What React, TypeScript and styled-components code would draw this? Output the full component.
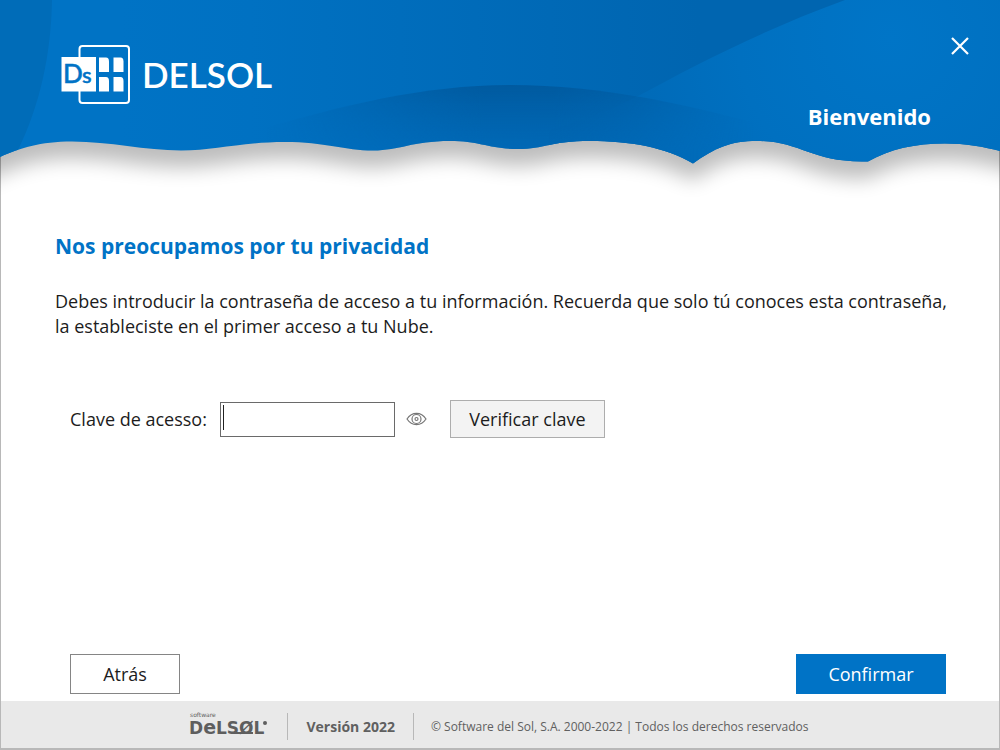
import React from "react";
import styled, { createGlobalStyle } from "styled-components";

const GlobalStyle = createGlobalStyle`
  * { box-sizing: border-box; }
  body { margin: 0; background: #fff; }
  body, button, input { font-family: "Open Sans", "Noto Sans", sans-serif; }
  h1, h2, p { margin: 0; }
`;

const Window = styled.div`
  min-height: 100vh;
  display: flex;
  flex-direction: column;
  border: solid #b8b8b8;
  border-width: 0 1px 2px;
  background: #fff;
  color: #1c1c1c;
`;

const Header = styled.header`
  position: relative;
  height: 200px;
  margin: 0 -1px;
`;

const Backdrop = styled.svg`
  position: absolute;
  inset: 0;
  width: 100%;
  height: 100%;
`;

const HeaderContent = styled.div`
  position: relative;
  display: grid;
  grid-template-columns: 1fr auto;
  padding: 34px 28px 0 61px;
`;

const Brand = styled.div`
  display: flex;
  align-items: center;
  gap: 11px;
  padding-top: 10px;
  color: #fff;
  font: 600 35px/60px Lato, sans-serif;
`;

const CloseButton = styled.button`
  align-self: start;
  display: flex;
  padding: 0;
  border: 0;
  background: none;
  color: #fff;
  cursor: pointer;
`;

const Welcome = styled.h1`
  grid-column: 1 / -1;
  justify-self: end;
  margin-right: 41px;
  color: #fff;
  font-size: 22px;
  line-height: 24px;
`;

const Main = styled.main`
  flex: 1;
  display: flex;
  flex-direction: column;
  padding: 34px 53px 7px 54px;
`;

const Title = styled.h2`
  color: #0073c6;
  font-size: 21px;
  line-height: 24px;
`;

const Message = styled.p`
  margin: 31px -16px 0 0;
  font-size: 18px;
  line-height: 25px;
`;

const KeyForm = styled.form`
  display: flex;
  align-items: center;
  margin-top: 61px;
  padding-left: 15px;
  font-size: 18px;
`;

const KeyInput = styled.input`
  width: 175px;
  height: 35px;
  margin-left: 13px;
  padding: 0 4px;
  border: 1px solid #6a6a6a;
  border-radius: 0;
  font-size: 18px;
  background: linear-gradient(#222, #222) 2px 2px / 1px 25px no-repeat #fff;
`;

const RevealButton = styled.button`
  display: flex;
  margin: 0 23px 0 11px;
  padding: 0;
  border: 0;
  background: none;
  color: #777;
`;

const Button = styled.button<{ $width: number; $tone: "grey" | "white" | "blue" }>`
  width: ${(p) => p.$width}px;
  height: ${(p) => (p.$tone === "grey" ? 38 : 40)}px;
  padding: 0;
  border: 1px solid ${(p) => ({ grey: "#adadad", white: "#858585", blue: "#0073c6" })[p.$tone]};
  background: ${(p) => ({ grey: "#f3f3f3", white: "#fff", blue: "#0073c6" })[p.$tone]};
  color: ${(p) => (p.$tone === "blue" ? "#fff" : "#1c1c1c")};
  font-size: 18px;
  cursor: pointer;
`;

const Actions = styled.div`
  display: flex;
  justify-content: space-between;
  margin-top: auto;
  padding-left: 15px;
`;

const Footer = styled.footer`
  display: flex;
  align-items: center;
  justify-content: center;
  height: 47px;
  padding: 3px 2px 0 0;
  background: #e9e9e9;
  color: #606060;
`;

const Version = styled.strong`
  margin: 0 17px 0 19px;
  padding: 0 18px;
  border: solid #b8b8b8;
  border-width: 0 1px;
  font-size: 14px;
  line-height: 27px;
`;

const Legal = styled.small`
  font-size: 12px;
`;

const WAVE =
  "M-40,-60 V172 L0,157 C20,148 40,141.5 72,141.5 C110,141.5 145,150.5 181,150.5 C215,150.5 240,142 285,142 C325,142 345,150.5 373,150.5 C400,150.5 412,141 450,141 C480,141 490,149 518,149 C545,149 550,141 590,141 C630,141 665,147 693,163.5 C715,148 730,141 757,141 C800,141 810,161.5 862,161.5 L868,161.5 C890,149 915,143.5 945,143.5 C965,143.5 985,147 1000,151 L1040,162 V-60 Z";

function HeaderBackdrop() {
  return (
    <Backdrop viewBox="0 0 1000 200" preserveAspectRatio="none" aria-hidden="true">
      <defs>
        <linearGradient id="sky" x1="0" y1="0" x2="1000" y2="0" gradientUnits="userSpaceOnUse">
          <stop offset="0.12" stopColor="#0073c5" />
          <stop offset="0.25" stopColor="#0071c2" />
          <stop offset="0.7" stopColor="#0065b0" />
        </linearGradient>
        <linearGradient id="hill" x1="0" y1="85" x2="0" y2="150" gradientUnits="userSpaceOnUse">
          <stop offset="0" stopColor="#005a9f" />
          <stop offset="1" stopColor="#0067b4" stopOpacity="0.6" />
        </linearGradient>
        <linearGradient id="hillFade" x1="240" y1="0" x2="780" y2="0" gradientUnits="userSpaceOnUse">
          <stop offset="0.05" stopColor="#000" />
          <stop offset="0.45" stopColor="#fff" />
          <stop offset="0.58" stopColor="#fff" />
          <stop offset="0.95" stopColor="#000" />
        </linearGradient>
        <radialGradient id="glow" cx="890" cy="38" r="380" gradientUnits="userSpaceOnUse">
          <stop offset="0" stopColor="#0075c7" />
          <stop offset="0.4" stopColor="#0070c0" />
          <stop offset="0.9" stopColor="#0066b2" />
        </radialGradient>
        <clipPath id="wave"><path d={WAVE} /></clipPath>
        <mask id="hillMask"><rect width="1000" height="200" fill="url(#hillFade)" /></mask>
        <filter id="soft" x="-10%" y="-10%" width="120%" height="140%">
          <feGaussianBlur stdDeviation="10" />
        </filter>
      </defs>
      <path d={WAVE} transform="translate(0 17)" fill="#000" opacity="0.26" filter="url(#soft)" />
      <g clipPath="url(#wave)">
        <rect width="1000" height="200" fill="url(#sky)" />
        <path d="M0,0 H52 C51,55 40,105 18,150 L0,200 Z" fill="#006cb8" />
        <path d="M845,0 C760,31 690,68 640,95 Q600,116 550,130 L540,200 H1000 V0 Z" fill="url(#glow)" />
        <path d="M240,136 C330,108 420,85 510,85 C610,85 700,108 780,130 V200 H240 Z" fill="url(#hill)" mask="url(#hillMask)" />
      </g>
    </Backdrop>
  );
}

function DsLogo() {
  return (
    <svg width="70" height="60" viewBox="0 0 70 60" aria-hidden="true">
      <rect x="18.5" y="2" width="49.5" height="57" rx="3" fill="none" stroke="#fff" strokeWidth="2" />
      <rect x="0.5" y="13" width="34.5" height="34.5" fill="#fff" />
      <g fill="#fff">
        <path d="M38,13.500h7q3,0 3,4V28H38Z" />
        <path d="M52.500,13.500h7q3,0 3,4V28H52.500Z" />
        <path d="M38,33h7q3,0 3,4V47.500H38Z" />
        <path d="M52.500,33h7q3,0 3,4V47.500H52.500Z" />
      </g>
      <text y="39" fill="#0073c6" stroke="#0073c6" strokeWidth="0.500" fontFamily="Lato, sans-serif" fontWeight="500">
        <tspan x="2" fontSize="26">D</tspan>
        <tspan x="21" fontSize="22">s</tspan>
      </text>
    </svg>
  );
}

function FooterLogo() {
  return (
    <svg width="79" height="28" viewBox="0 0 79 28" role="img" aria-label="Software DELSOL">
      <g fontFamily="DejaVu Sans, sans-serif" fill="#5e5e5e">
        <text x="1" y="5" fontSize="6">software</text>
        <text y="22" fontSize="17" fontWeight="700">
          <tspan x="0">D</tspan><tspan fontSize="19">e</tspan><tspan>LSØL</tspan>
        </text>
      </g>
      <path d="M44,21H64" stroke="#5e5e5e" strokeWidth="2" />
      <circle cx="76" cy="11" r="2" fill="#5e5e5e" />
    </svg>
  );
}

export default function App() {
  return (
    <Window>
      <GlobalStyle />
      <Header>
        <HeaderBackdrop />
        <HeaderContent>
          <Brand><DsLogo />DELSOL</Brand>
          <CloseButton type="button" aria-label="Cerrar">
            <svg width="24" height="24" viewBox="0 0 24 24" fill="none" stroke="currentColor" strokeWidth="2.200">
              <path d="M4,4 20,20M20,4 4,20" />
            </svg>
          </CloseButton>
          <Welcome>Bienvenido</Welcome>
        </HeaderContent>
      </Header>
      <Main>
        <Title>Nos preocupamos por tu privacidad</Title>
        <Message>
          Debes introducir la contraseña de acceso a tu información. Recuerda que solo tú conoces esta contraseña,
          la estableciste en el primer acceso a tu Nube.
        </Message>
        <KeyForm onSubmit={(e) => e.preventDefault()}>
          <label htmlFor="clave">Clave de acesso:</label>
          <KeyInput id="clave" type="password" />
          <RevealButton type="button" aria-label="Mostrar clave">
            <svg width="21" height="16" viewBox="0 0 21 16" fill="none" stroke="currentColor" strokeWidth="1.200">
              <path d="M1,8C6,0.500 15,0.500 20,8C15,15.500 6,15.500 1,8Z" />
              <circle cx="10.500" cy="8" r="4.500" />
              <circle cx="10.500" cy="8" r="1.500" />
            </svg>
          </RevealButton>
          <Button type="submit" $width={155} $tone="grey">Verificar clave</Button>
        </KeyForm>
        <Actions>
          <Button type="button" $width={110} $tone="white">Atrás</Button>
          <Button type="button" $width={150} $tone="blue">Confirmar</Button>
        </Actions>
      </Main>
      <Footer>
        <FooterLogo />
        <Version>Versión 2022</Version>
        <Legal>© Software del Sol, S.A. 2000-2022 | Todos los derechos reservados</Legal>
      </Footer>
    </Window>
  );
}
